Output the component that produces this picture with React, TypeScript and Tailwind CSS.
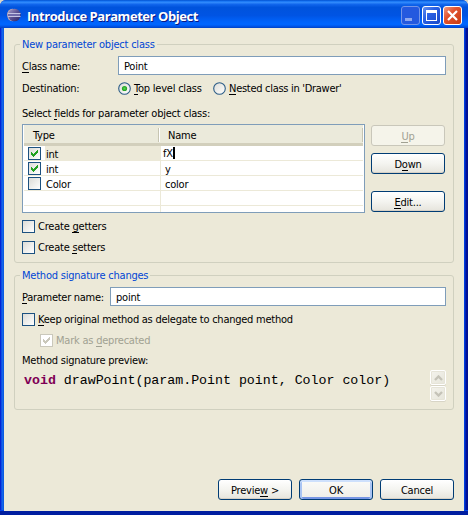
import type { ReactNode } from 'react';

function Text({ children, className = '' }: { children: ReactNode; className?: string }) {
  return <span className={`block h-[14px] whitespace-pre leading-[16px] ${className}`}>{children}</span>;
}

function U({ children }: { children: ReactNode }) {
  return <span className="shadow-[inset_0_-1px_0_currentColor]">{children}</span>;
}

function Check({ checked = false, disabled = false }: { checked?: boolean; disabled?: boolean }) {
  const box = disabled
    ? 'border-[#cac8bb] bg-white'
    : 'border-[#1c5180] bg-linear-to-br from-[#dcdcd7] to-white';
  return (
    <span className={`block size-[13px] shrink-0 border ${box}`}>
      {checked && (
        <svg width="11" height="11" viewBox="0 0 11 11" className="block" shapeRendering="crispEdges">
          <path
            d="M2 4h1v1h1v1h1v-1h1v-1h1v-1h1v-1h1v3h-1v1h-1v1h-1v1h-1v1h-1v-1h-1v-1h-1z"
            fill={disabled ? '#cac8bb' : '#21a121'}
          />
        </svg>
      )}
    </span>
  );
}

function Radio({ checked = false }: { checked?: boolean }) {
  return (
    <svg width="13" height="13" viewBox="0 0 13 13" className="block shrink-0">
      <defs>
        <linearGradient id="radioFill" x1="0" y1="0" x2="1" y2="1">
          <stop offset="0" stopColor="#dcdcd7" />
          <stop offset="1" stopColor="#fff" />
        </linearGradient>
        <radialGradient id="radioDot">
          <stop offset="0" stopColor="#55d551" />
          <stop offset="1" stopColor="#1c9b1c" />
        </radialGradient>
      </defs>
      <circle cx="6.5" cy="6.5" r="5.8" fill="url(#radioFill)" stroke="#2b5c87" strokeWidth="1.1" />
      {checked && <circle cx="6.5" cy="6.5" r="2.6" fill="url(#radioDot)" />}
    </svg>
  );
}

function Button({ children, variant = 'normal' }: { children: ReactNode; variant?: 'normal' | 'default' | 'disabled' }) {
  const style = {
    normal: 'border-[#003c74] bg-linear-to-b from-white via-[#f4f4f0] to-[#e6e4dc] text-black shadow-[inset_0_-1px_0_#d6d0c5]',
    default:
      'border-[#003c74] bg-linear-to-b from-[#fbfbf9] to-[#eeede7] text-black shadow-[inset_0_2px_0_#cee0fc,inset_2px_0_0_#a9c4f3,inset_-2px_0_0_#a9c4f3,inset_0_-2px_0_#7695e4]',
    disabled: 'border-[#c9c7ba] bg-[#f5f4ea] text-[#a1a192]',
  }[variant];
  return (
    <div className={`flex h-[21px] w-[74px] shrink-0 items-center justify-center rounded-[3px] border ${style}`}>
      <Text>{children}</Text>
    </div>
  );
}

function Group({ title, className, children }: { title: string; className: string; children: ReactNode }) {
  return (
    <fieldset className={`ml-[10px] w-[440px] min-w-0 rounded-[3px] border border-[#d0d0bf] ${className}`}>
      <legend className="ml-[5px] h-[14px] px-[2px] text-[#0046d5]">
        <Text>{title}</Text>
      </legend>
      {children}
    </fieldset>
  );
}

function Field({ value, className }: { value: string; className: string }) {
  return (
    <div className={`flex h-[19px] items-center border border-[#7f9db9] bg-white pl-[5px] ${className}`}>
      <Text>{value}</Text>
    </div>
  );
}

interface RowProps {
  type?: string;
  name?: string;
  checked?: boolean;
  editing?: boolean;
}

function Row({ type, name, checked = false, editing = false }: RowProps) {
  return (
    <div className="flex h-[15px] shrink-0 border-b border-[#ece9d8]">
      <div className="flex h-[14px] w-[137px] border-r border-[#ece9d8] pl-1">
        {type && (
          <>
            <div className="pt-px">
              <Check checked={checked} />
            </div>
            <div className={`ml-1 h-[14px] flex-1 pl-px ${editing ? 'bg-[#ece9d8]' : ''}`}>
              <Text className="pt-px">{type}</Text>
            </div>
          </>
        )}
      </div>
      <div className={`flex ${editing ? 'pl-[2px]' : 'pl-1'}`}>
        <Text className={editing ? '' : 'pt-px'}>{name}</Text>
        {editing && <span className="mt-px block h-[12px] w-[2px] bg-black" />}
      </div>
    </div>
  );
}

function ScrollButton({ down = false }: { down?: boolean }) {
  return (
    <div className="flex h-[15px] w-[16px] items-center justify-center rounded-[2px] border border-white bg-linear-to-br from-[#f4f3ed] to-[#e6e5da] shadow-[inset_0_0_0_1px_#e6e4d8,0_1px_0_#d8d5c6]">
      <svg width="9" height="6" viewBox="0 0 9 6" className="block">
        <path d={down ? 'M1 1l3.5 3.5L8 1' : 'M1 5l3.5-3.5L8 5'} fill="none" stroke="#c5c3b8" strokeWidth="2.4" />
      </svg>
    </div>
  );
}

function TitleBar() {
  return (
    <header className="flex h-[28px] items-center bg-[linear-gradient(180deg,#0050d0_0%,#1c79f5_5%,#2f88fb_9%,#1065ec_16%,#0053dc_26%,#0054e3_55%,#0063fb_78%,#0066ff_87%,#0058ee_93%,#0041c4_100%)] pl-[7px] pr-[6px]">
      <svg width="14" height="14" viewBox="0 0 14 14" className="mt-[2px] block shrink-0">
        <defs>
          <linearGradient id="orb" x1="0" y1="0" x2="1" y2="1">
            <stop offset="0" stopColor="#aaa0c9" />
            <stop offset="0.5" stopColor="#5a5192" />
            <stop offset="1" stopColor="#2c2464" />
          </linearGradient>
        </defs>
        <ellipse cx="5.4" cy="7" rx="5.3" ry="6.2" fill="#bda9b4" />
        <circle cx="7.4" cy="7" r="6.3" fill="url(#orb)" />
        <path d="M1 5.5h12.5M1 8.5h12.5" stroke="#c4c4e4" strokeWidth="1" />
        <path d="M1 7h12" stroke="#6f6bab" strokeWidth="2" />
      </svg>
      <span className="ml-[6px] mt-[3px] whitespace-pre text-[13px] font-bold leading-[16px] tracking-[-0.44px] text-white [font-family:'Open_Sans','Noto_Sans',sans-serif] [text-shadow:1px_1px_0_#0a1883]">
        Introduce Parameter Object
      </span>
      <div className="ml-auto mt-[3px] flex gap-[2px]">
        <svg width="19" height="19" viewBox="0 0 19 19">
          <rect x=".5" y=".5" width="18" height="18" rx="2.5" fill="#2459df" stroke="#7495e8" />
          <path d="M4 12h7v3H4z" fill="#8ea8ee" />
        </svg>
        <svg width="19" height="19" viewBox="0 0 19 19">
          <defs>
            <linearGradient id="maxFill" x1="0" y1="0" x2="1" y2="1">
              <stop offset="0" stopColor="#6a95f2" />
              <stop offset=".4" stopColor="#2a60e4" />
              <stop offset="1" stopColor="#1747c6" />
            </linearGradient>
          </defs>
          <rect x=".5" y=".5" width="18" height="18" rx="2.5" fill="url(#maxFill)" stroke="#fff" />
          <path d="M4 4h11v11H4zM5 7v7h9V7z" fill="#fff" fillRule="evenodd" />
        </svg>
        <svg width="19" height="19" viewBox="0 0 19 19">
          <defs>
            <linearGradient id="closeFill" x1="0" y1="0" x2="1" y2="1">
              <stop offset="0" stopColor="#f0a088" />
              <stop offset=".4" stopColor="#e1532f" />
              <stop offset="1" stopColor="#c73a10" />
            </linearGradient>
          </defs>
          <rect x=".5" y=".5" width="18" height="18" rx="2.5" fill="url(#closeFill)" stroke="#fff" />
          <path d="M5 5l9 9M14 5l-9 9" stroke="#fff" strokeWidth="2.2" />
        </svg>
      </div>
    </header>
  );
}

export default function App() {
  return (
    <div className="h-[515px] w-[468px] bg-[#d9d7c8]">
      <div className="flex h-[515px] w-[468px] flex-col overflow-hidden rounded-t-[6px] bg-[#0831d9] text-[11px] tracking-[-0.22px] text-black [font-family:'DejaVu_Sans_Condensed','DejaVu_Sans',sans-serif]">
        <TitleBar />
        <div className="flex flex-1 border-b-[4px] border-[#001ea0] bg-[linear-gradient(90deg,#0019cf_0,#0831d9_1px,#166aee_2px,#0855dd_4px,#0855dd_460px,#0046e8_464px,#0035d0_465px,#0010a0_466px,#00108a_468px)] px-[4px] shadow-[inset_0_-1px_0_#0046e8]">
          <main className="h-[483px] w-[460px] bg-[#ece9d8]">
            <Group title="New parameter object class" className="mt-[9px] h-[226px]">
              <div className="ml-[7px] mt-[5px] flex items-center">
                <Text className="w-[96px]"><U>C</U>lass name:</Text>
                <Field value="Point" className="w-[328px]" />
              </div>
              <div className="ml-[7px] mt-[6px] flex items-center">
                <Text className="w-[96px]">Destination:</Text>
                <Radio checked />
                <Text className="ml-[3px] w-[79px]"><U>T</U>op level class</Text>
                <Radio />
                <Text className="ml-[3px] tracking-[-0.29px]"><U>N</U>ested class in 'Drawer'</Text>
              </div>
              <Text className="ml-[7px] mt-[11px]">Select <U>f</U>ields for parameter object class:</Text>
              <div className="ml-[7px] mt-[4px] flex">
                <div className="flex h-[89px] w-[343px] flex-col overflow-hidden border border-[#7f9db9] bg-white px-px">
                  <div className="flex h-[21px] shrink-0 border-b-[3px] border-[#d2cfbc] bg-[#ebeadb] pt-px">
                    <Text className="mt-[2px] w-[135px] border-r border-[#c7c5b2] pl-[9px]">Type</Text>
                    <Text className="mt-[2px] flex-1 border-l border-r border-l-white border-r-[#c7c5b2] pl-[8px]">Name</Text>
                  </div>
                  <Row type="int" name="fX" checked editing />
                  <Row type="int" name="y" checked />
                  <Row type="Color" name="color" />
                  <Row />
                  <Row />
                </div>
                <div className="ml-[6px] flex flex-col pt-px">
                  <Button variant="disabled"><U>U</U>p</Button>
                  <div className="mt-[7px]"><Button>D<U>o</U>wn</Button></div>
                  <div className="mt-[17px]"><Button><U>E</U>dit...</Button></div>
                </div>
              </div>
              <div className="ml-[7px] mt-[6px] flex items-center gap-[3px]">
                <Check /><Text>Create <U>g</U>etters</Text>
              </div>
              <div className="ml-[7px] mt-[7px] flex items-center gap-[3px]">
                <Check /><Text>Create <U>s</U>etters</Text>
              </div>
            </Group>
            <Group title="Method signature changes" className="mt-[5px] h-[142px]">
              <div className="ml-[7px] mt-[5px] flex items-center">
                <Text className="w-[88px] tracking-[-0.28px]"><U>P</U>arameter name:</Text>
                <Field value="point" className="w-[336px]" />
              </div>
              <div className="ml-[7px] mt-[6px] flex items-center gap-[3px]">
                <Check /><Text className="tracking-[-0.25px]"><U>K</U>eep original method as delegate to changed method</Text>
              </div>
              <div className="ml-[25px] mt-[7px] flex items-center gap-[3px] text-[#a1a192]">
                <Check checked disabled /><Text>Mark as <U>d</U>eprecated</Text>
              </div>
              <Text className="ml-[7px] mt-[6px]">Method signature preview:</Text>
              <div className="ml-[9px] mt-[3px] flex h-[31px] w-[422px] justify-between">
                <code className="mt-[3px] whitespace-pre text-[13.3px] leading-[15px] tracking-[-0.02px] [font-family:'Liberation_Mono',monospace]">
                  <b className="text-[#7f0055]">void</b> drawPoint(param.Point point, Color color)
                </code>
                <div className="flex flex-col gap-px">
                  <ScrollButton />
                  <ScrollButton down />
                </div>
              </div>
            </Group>
            <div className="ml-[214px] mt-[69px] flex gap-[7px]">
              <Button>Previe<U>w</U> &gt;</Button>
              <Button variant="default">OK</Button>
              <Button>Cancel</Button>
            </div>
          </main>
        </div>
      </div>
    </div>
  );
}
